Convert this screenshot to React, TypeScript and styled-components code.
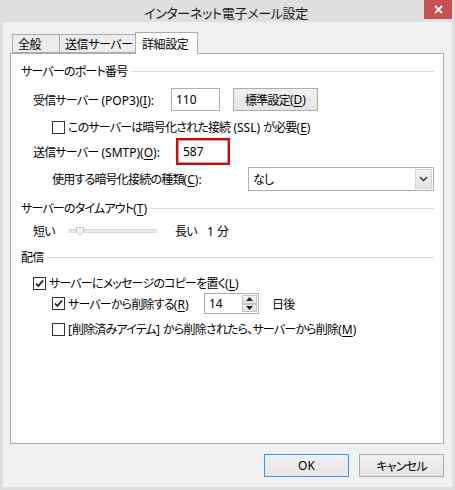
import styled, { createGlobalStyle } from 'styled-components';

const GlobalStyle = createGlobalStyle`
  html, body {
    margin: 0;
    padding: 0;
    background: #dfdfdf;
  }
  body {
    font-family: 'Segoe UI', 'Noto Sans', 'Noto Sans CJK JP', sans-serif;
    font-size: 12px;
    color: #000;
    font-feature-settings: 'palt' 1;
    letter-spacing: -0.8px;
  }
`;

const Window = styled.div`
  width: 455px;
  height: 490px;
  background: #dfdfdf;
  display: flex;
  flex-direction: column;
  box-sizing: border-box;
`;

const TitleBar = styled.div`
  height: 22px;
  flex-shrink: 0;
  display: grid;
  grid-template-columns: 1fr auto 1fr;
  align-items: start;
  padding-right: 3px;
`;

const Title = styled.div`
  grid-column: 2;
  font-size: 13px;
  line-height: 26px;
  letter-spacing: -0.3px;
  color: #1a1a1a;
  white-space: nowrap;
`;

const CloseButton = styled.div`
  grid-column: 3;
  justify-self: end;
  width: 28px;
  height: 19px;
  background: #c75050;
  display: flex;
  align-items: center;
  justify-content: center;
`;

const Client = styled.div`
  flex: 1;
  margin: 0 3px 3px;
  background: #f0f0f0;
  display: flex;
  flex-direction: column;
`;

const TabStrip = styled.div`
  display: flex;
  align-items: flex-end;
  height: 21px;
  margin-top: 10px;
  padding-left: 9px;
`;

const Tab = styled.div<{ $w: number; $active?: boolean }>`
  position: relative;
  box-sizing: border-box;
  width: ${p => p.$w}px;
  height: ${p => (p.$active ? 22 : 19)}px;
  margin-left: -1px;
  margin-bottom: ${p => (p.$active ? -1 : 0)}px;
  padding-left: ${p => (p.$active ? 6 : 5)}px;
  display: flex;
  align-items: center;
  border: 1px solid #acacac;
  border-bottom: ${p => (p.$active ? 'none' : '1px solid #acacac')};
  background: ${p => (p.$active ? '#fff' : '#ececec')};
  z-index: ${p => (p.$active ? 2 : 1)};
  white-space: nowrap;
  letter-spacing: -0.4px;
  &:first-child {
    margin-left: 0;
  }
`;

const TabPanel = styled.div`
  box-sizing: border-box;
  height: 391px;
  margin: 0 8px 0 7px;
  border: 1px solid #acacac;
  background: #fff;
  padding: 0 9px 0 10px;
  display: flex;
  flex-direction: column;
`;

const GroupHeader = styled.div<{ $mt: number }>`
  display: flex;
  align-items: center;
  gap: 4px;
  height: 16px;
  margin-top: ${p => p.$mt}px;
  white-space: nowrap;
  &::after {
    content: '';
    flex: 1;
    height: 1px;
    background: #dcdcdc;
  }
`;

const Row = styled.div<{ $mt: number; $h: number; $indent: number }>`
  display: flex;
  align-items: center;
  height: ${p => p.$h}px;
  margin-top: ${p => p.$mt}px;
  padding-left: ${p => p.$indent}px;
  white-space: nowrap;
`;

const Label = styled.span<{ $w?: number }>`
  flex-shrink: 0;
  ${p => (p.$w ? `width: ${p.$w}px;` : '')}
`;

/* latin runs keep their normal spacing */
const Lat = styled.span`
  letter-spacing: 0;
`;

const Key = styled.span`
  text-decoration: underline;
  text-underline-offset: 2px;
`;

const TextBox = styled.div<{ $w: number; $h: number }>`
  box-sizing: border-box;
  width: ${p => p.$w}px;
  height: ${p => p.$h}px;
  border: 1px solid #abadb3;
  background: #fff;
  padding-left: 4px;
  display: flex;
  align-items: center;
  flex-shrink: 0;
  letter-spacing: 0;
`;

const Highlight = styled.div`
  border: 2px solid #e30000;
  flex-shrink: 0;
`;

const PushButton = styled.div<{ $w: number; $default?: boolean }>`
  box-sizing: border-box;
  width: ${p => p.$w}px;
  height: 23px;
  border: 1px solid ${p => (p.$default ? '#3399ff' : '#acacac')};
  background: linear-gradient(#f0f0f0, #e5e5e5);
  display: flex;
  align-items: center;
  justify-content: center;
  flex-shrink: 0;
`;

const Combo = styled.div`
  box-sizing: border-box;
  width: 186px;
  height: 24px;
  border: 1px solid #abadb3;
  background: #fff;
  padding: 1px 1px 1px 4px;
  display: flex;
  align-items: center;
  flex-shrink: 0;
`;

const ComboText = styled.span`
  flex: 1;
`;

const ComboArrow = styled.div`
  box-sizing: border-box;
  width: 17px;
  height: 100%;
  border: 1px solid #d5d5d5;
  background: linear-gradient(#f2f2f2, #e4e4e4);
  display: flex;
  align-items: center;
  justify-content: center;
`;

const Track = styled.div`
  position: relative;
  box-sizing: border-box;
  width: 88px;
  height: 4px;
  margin-right: 18px;
  background: #e7e7e7;
  border: 1px solid #d9d9d9;
  flex-shrink: 0;
`;

const Thumb = styled.svg`
  position: absolute;
  left: 6px;
  top: -3px;
`;

const Box = styled.div`
  box-sizing: border-box;
  width: 13px;
  height: 13px;
  border: 1px solid #333;
  background: #fff;
  margin-right: 3px;
  display: flex;
  align-items: center;
  justify-content: center;
  flex-shrink: 0;
`;

const Spin = styled.div`
  box-sizing: border-box;
  width: 55px;
  height: 21px;
  border: 1px solid #abadb3;
  background: #fff;
  padding: 1px 1px 1px 4px;
  display: flex;
  align-items: center;
  margin-right: 13px;
  flex-shrink: 0;
  letter-spacing: 0;
`;

const SpinValue = styled.span`
  flex: 1;
`;

const SpinButtons = styled.div`
  width: 15px;
  height: 100%;
  display: flex;
  flex-direction: column;
`;

const SpinButton = styled.div`
  flex: 1;
  box-sizing: border-box;
  border: 1px solid #c4c4c4;
  background: linear-gradient(#f2f2f2, #e2e2e2);
  display: flex;
  align-items: center;
  justify-content: center;
`;

const ButtonRow = styled.div`
  display: flex;
  justify-content: flex-end;
  gap: 10px;
  margin-top: 10px;
  padding-right: 8px;
`;

const Check = ({ checked }: { checked?: boolean }) => (
  <Box>
    {checked && (
      <svg width="9" height="9" viewBox="0 0 9 9">
        <path d="M1 4.5 L3.4 7 L8 1.5" fill="none" stroke="#1a1a1a" strokeWidth="1.8" />
      </svg>
    )}
  </Box>
);

export default function App() {
  return (
    <>
      <GlobalStyle />
      <Window>
        <TitleBar>
          <Title>インターネット電子メール設定</Title>
          <CloseButton>
            <svg width="9" height="9" viewBox="0 0 9 9">
              <path d="M1 1 L8 8 M8 1 L1 8" stroke="#fff" strokeWidth="1.8" />
            </svg>
          </CloseButton>
        </TitleBar>
        <Client>
          <TabStrip>
            <Tab $w={48}>全般</Tab>
            <Tab $w={77}>送信サーバー</Tab>
            <Tab $w={63} $active>
              詳細設定
            </Tab>
          </TabStrip>
          <TabPanel>
            <GroupHeader $mt={9}>サーバーのポート番号</GroupHeader>

            <Row $mt={9} $h={23} $indent={12}>
              <Label $w={138}>
                受信サーバー<Lat> (POP3)(<Key>I</Key>):</Lat>
              </Label>
              <TextBox $w={49} $h={23}>110</TextBox>
              <Label $w={13} />
              <PushButton $w={85}>
                標準設定<Lat>(<Key>D</Key>)</Lat>
              </PushButton>
            </Row>

            <Row $mt={9} $h={14} $indent={31}>
              <Check />
              <Label>
                このサーバーは暗号化された接続<Lat> (SSL) </Lat>が必要<Lat>(<Key>E</Key>)</Lat>
              </Label>
            </Row>

            <Row $mt={4} $h={27} $indent={12}>
              <Label $w={143}>
                送信サーバー<Lat> (SMTP)(<Key>O</Key>):</Lat>
              </Label>
              <Highlight>
                <TextBox $w={50} $h={23}>587</TextBox>
              </Highlight>
            </Row>

            <Row $mt={2} $h={24} $indent={31}>
              <Label $w={196}>
                使用する暗号化接続の種類<Lat>(<Key>C</Key>):</Lat>
              </Label>
              <Combo>
                <ComboText>なし</ComboText>
                <ComboArrow>
                  <svg width="9" height="6" viewBox="0 0 9 6">
                    <path d="M1 1 L4.5 4.5 L8 1" fill="none" stroke="#444" strokeWidth="1.6" />
                  </svg>
                </ComboArrow>
              </Combo>
            </Row>

            <GroupHeader $mt={9}>
              <span>
                サーバーのタイムアウト<Lat>(<Key>T</Key>)</Lat>
              </span>
            </GroupHeader>

            <Row $mt={7} $h={16} $indent={12}>
              <Label $w={36}>短い</Label>
              <Track>
                <Thumb width="8" height="9" viewBox="0 0 8 9">
                  <path d="M0.5 0.5 H7.5 V5 L4 8.5 L0.5 5 Z" fill="#f3f3f3" stroke="#c6c6c6" />
                </Thumb>
              </Track>
              <Label $w={32}>長い</Label>
              <Label>
                <Lat>1 </Lat>分
              </Label>
            </Row>

            <GroupHeader $mt={10}>配信</GroupHeader>

            <Row $mt={10} $h={16} $indent={12}>
              <Check checked />
              <Label>
                サーバーにメッセージのコピーを置く<Lat>(<Key>L</Key>)</Lat>
              </Label>
            </Row>

            <Row $mt={2} $h={21} $indent={31}>
              <Check checked />
              <Label $w={136}>
                サーバーから削除する<Lat>(<Key>R</Key>)</Lat>
              </Label>
              <Spin>
                <SpinValue>14</SpinValue>
                <SpinButtons>
                  <SpinButton>
                    <svg width="7" height="4" viewBox="0 0 7 4">
                      <path d="M0 4 L3.5 0 L7 4 Z" fill="#222" />
                    </svg>
                  </SpinButton>
                  <SpinButton>
                    <svg width="7" height="4" viewBox="0 0 7 4">
                      <path d="M0 0 L3.5 4 L7 0 Z" fill="#222" />
                    </svg>
                  </SpinButton>
                </SpinButtons>
              </Spin>
              <Label>日後</Label>
            </Row>

            <Row $mt={7} $h={16} $indent={31}>
              <Check />
              <Label>
                <Lat>[</Lat>削除済みアイテム<Lat>] </Lat>から削除されたら、サーバーから削除<Lat>(<Key>M</Key>)</Lat>
              </Label>
            </Row>
          </TabPanel>
          <ButtonRow>
            <PushButton $w={85} $default>
              <Lat>OK</Lat>
            </PushButton>
            <PushButton $w={85}>キャンセル</PushButton>
          </ButtonRow>
        </Client>
      </Window>
    </>
  );
}
